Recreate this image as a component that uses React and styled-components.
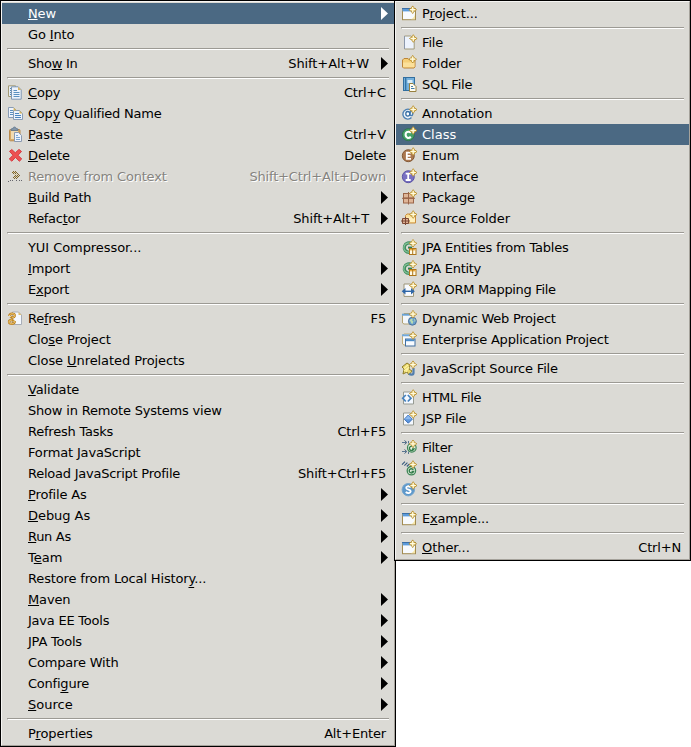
import React from "react";
import styled, { createGlobalStyle, css } from "styled-components";

const GlobalStyle = createGlobalStyle`
  * { box-sizing: border-box; }
  body { margin: 0; background: #fff; overflow: hidden; }
`;

const FACE = "#dbdad5";
const SELECT = "#4b6983";

const Stage = styled.main`
  display: flex;
  align-items: flex-start;
  width: 691px;
  height: 747px;
  background: #fff;
  font: 13px/21px "DejaVu Sans", Verdana, sans-serif;
  color: #000;
  cursor: default;
`;

const MenuPanel = styled.div`
  flex: none;
  width: ${(p) => p.$width}px;
  margin-left: ${(p) => p.$overlap || 0}px;
  border: 1px solid #000;
  background: ${FACE};
`;

const MenuBevel = styled.div`
  display: flex;
  flex-direction: column;
  padding: 1px 0;
  border: 1px solid;
  border-color: #f6f5f3 #a5a29b #a5a29b #f6f5f3;
`;

const Item = styled.div`
  display: flex;
  align-items: center;
  height: 21px;
  padding: 0 6px 0 5px;
  white-space: pre;
  ${(p) => p.$selected && css`
    background: ${SELECT};
    color: #fff;
  `}
  ${(p) => p.$disabled && css`
    color: #86847f;
    text-shadow: 1px 1px 0 #fff;
  `}
`;

const IconSlot = styled.span`
  display: flex;
  flex: none;
  width: 21px;
  height: 17px;
  padding-bottom: 1px;
`;

const Glyph = styled.svg`
  width: 16px;
  height: 16px;
  flex: none;
  overflow: visible;
`;

const Label = styled.span`
  flex: 1;
  letter-spacing: ${(p) => p.$tracking}px;
`;

const Mnemonic = styled.span`
  text-decoration: underline;
  text-decoration-thickness: 1px;
  text-decoration-skip-ink: none;
  text-underline-offset: ${(p) => (p.$low ? 4 : 1)}px;
`;

const Shortcut = styled.span`
  margin-right: ${(p) => (p.$beforeArrow ? 12 : 2)}px;
  letter-spacing: ${(p) => (p.$beforeArrow ? -0.1 : -0.17)}px;
`;

const Arrow = styled.svg`
  width: 7px;
  height: 13px;
  flex: none;
  fill: currentColor;
`;

const Separator = styled.div`
  height: 2px;
  margin: 3px 5px;
  border-top: 1px solid #9c9a94;
  border-bottom: 1px solid #fff;
  border-left: 1px solid #9c9a94;
`;

/* ---------- icon pieces ---------- */

const Star = ({ x = 12.2, y = 4.5 }) => (
  <g transform={`translate(${x} ${y})`}>
    <path d="M0-3.8 1.5-1.5 3.8 0 1.5 1.5 0 3.8-1.5 1.5-3.8 0-1.5-1.5Z" fill="#e3c469" stroke="#b98f2f" strokeWidth=".9" />
    <path d="M0-2.7V2.7M-2.7 0H2.7" stroke="#fffbe0" strokeWidth="1.2" />
  </g>
);

const Sheet = ({ x, y, w, h, stroke = "#93a6bf", fill = "#edf3fc" }) => (
  <path d={`M${x} ${y}h${w - 3}l3 3v${h - 3}h${-w}z`} fill={fill} stroke={stroke} />
);

const TypeBall = ({ color, dark, letter }) => (
  <>
    <circle cx="7.3" cy="8.7" r="6" fill={color} stroke={dark} strokeWidth=".9" />
    {letter}
  </>
);

const Grid = () => (
  <g fill="#dfb698" stroke="#9a6549">
    <rect x="2.5" y="4.5" width="5" height="4.7" />
    <rect x="7.5" y="4.5" width="5" height="4.7" />
    <rect x="2.5" y="9.2" width="5" height="4.8" />
    <rect x="7.5" y="9.2" width="5" height="4.8" />
    <path d="M7.5 3v12.5M1 9.3h13" />
  </g>
);

const JpaClass = () => (
  <>
    <path d="M11 5A4.7 4.7 0 1 0 8.5 13.3" fill="none" stroke="#3f8f60" strokeWidth="3.2" />
    <path d="M10.6 5.2A4.6 4.6 0 1 0 8.2 13.1" fill="none" stroke="#8cc49c" strokeWidth="1.1" />
    <path d="M11 8.6H7" stroke="#2f8052" strokeWidth="2" />
    <rect x="8.5" y="9.5" width="6.5" height="6" fill="#fffbe8" stroke="#ad761c" />
    <path d="M9 10.7h5.6" stroke="#edac3e" strokeWidth="1.4" />
    <path d="M11.7 10v5" stroke="#ad761c" />
    <Star x={12} y={4.3} />
  </>
);

const NewWindow = () => (
  <>
    <rect x="1.5" y="3.5" width="13" height="11.2" fill="#f7fafd" stroke="#a28b50" />
    <path d="M10 14.2c2.5-1 3.8-3 4-6v6z" fill="#f6e6a8" />
    <path d="M1 3.5h12" stroke="#3b6ea5" />
    <path d="M1.5 5.2h12.5" stroke="#5b9bdc" strokeWidth="2.4" />
    <Star x={11.7} y={4.7} />
  </>
);

const icons = {
  copy: (
    <>
      <path d="M1.5 1.8h7v10.7h-7z" fill="#e8eef4" stroke="#a39a74" />
      <path d="M3 4.5h2M3 6.5h2M3 8.5h2M3 10.5h2" stroke="#4f86b5" />
      <Sheet x={4.5} y={2.8} w={9.7} h={12.4} stroke="#7d96b2" />
      <path d="M11 2.8v3.2h3.2z" fill="#d9b565" />
      <path d="M6.5 6.5H10M6.5 8.5h6M6.5 10.5h6M6.5 12.5h6" stroke="#5c91c0" />
    </>
  ),
  copyName: (
    <>
      <Sheet x={1.5} y={2.5} w={8} h={10} stroke="#899cb5" />
      <path d="M3 5.5h3M3 7.5h3M3 9.5h3" stroke="#5c8fbe" />
      <Sheet x={6.5} y={5.5} w={9} h={9} stroke="#899cb5" />
      <path d="M6.6 2.5 9.5 5.5H6.6zM12.5 5.5l3 3h-3z" fill="#dbb657" />
      <path d="M8 8.5h4M8 10.5h6M8 12.5h6" stroke="#4d87bf" />
    </>
  ),
  paste: (
    <>
      <rect x="2.5" y="3.5" width="10.5" height="11.3" rx="1" fill="#d9aa64" stroke="#b98a4c" />
      <rect x="4" y="5" width="7" height="8" fill="#f1dbb2" />
      <path d="M4 4.5V3l2-.5c0-2 3-2 3 0l2 .5v1.5z" fill="#8396a8" stroke="#60758d" strokeWidth=".8" />
      <Sheet x={7.5} y={6.5} w={7} h={9} stroke="#8c9ab0" />
      <path d="M9 9.5h2M9 11.5h4M9 13.5h4" stroke="#7da7d3" />
    </>
  ),
  delete: (
    <path
      d="M2.5 4.3 4.8 2.5 8.3 5.8 12 2.4l2.5 2.1L11 8.2l3.7 3.8-2.3 2.2-4-3.8-3.5 3.8L2.3 12 6 8.2z"
      fill="#ed5151" stroke="#d83b42" strokeLinejoin="round"
    />
  ),
  remove: (
    <>
      <g fill="none" stroke="#7c642c" strokeDasharray="1 1">
        <path d="M6 3.5h3M5 4.5h5M6 5.5h5M7 6.5h5M8 7.5h5M7 8.5h5M6 9.5h5M7 10.5h3" />
      </g>
      <path d="M6 4.5h3M7 6.5h4M8 8.5h3" stroke="#d3c193" strokeDasharray="1 1" />
      <path d="M3 12.5h3M9 12.5h1M12 12.5h4M1 13.5h2" stroke="#65656d" strokeDasharray="1 1" />
    </>
  ),
  refresh: (
    <>
      <Sheet x={5.5} y={2} w={9} h={12.5} stroke="#a8aeb8" fill="#f5f9ff" />
      <path d="M11.5 2v3h3z" fill="#e1bd69" />
      <g fill="none" stroke="#b87d1e" strokeWidth="2.3">
        <path d="M2.3 6C2.5 3.2 7.8 3 7.8 5.4c0 2-2 2-3.5 2.2" />
        <path d="M7.8 11C8 14.4 2 14.6 2 12c0-1.6 1.6-2 3-2" />
      </g>
      <g fill="none" stroke="#f7d27a" strokeWidth="1">
        <path d="M2.3 6C2.5 3.2 7.8 3 7.8 5.4c0 2-2 2-3.5 2.2" />
        <path d="M7.8 11C8 14.4 2 14.6 2 12c0-1.6 1.6-2 3-2" />
      </g>
      <path d="M5 5.8 2.5 7.8l2.7 1.2zM5 8.8l3 1.4-3 1.6z" fill="#c38c22" />
    </>
  ),
  window: <NewWindow />,
  file: (
    <>
      <Sheet x={3.5} y={2} w={9.7} h={13} stroke="#a29b7c" fill="#edf3fd" />
      <path d="M3.5 15V2" stroke="#8b97aa" />
      <Star x={12.3} y={4.5} />
    </>
  ),
  folder: (
    <>
      <path d="M1.5 12V5L3 3.5h4L8.5 5H14v7l-1 1H2.5z" fill="#f5cf78" stroke="#bc8438" />
      <path d="M2 7.5h11.5v4.7H2z" fill="#fbe09a" />
      <Star x={11.7} y={4.2} />
    </>
  ),
  sql: (
    <>
      <rect x="2.5" y="1.5" width="11" height="13" fill="#74b1dd" stroke="#336f9f" />
      <path d="M4.7 2v12.5" stroke="#2d6d9f" strokeWidth="1.2" />
      <path d="M6.5 4h5v3h-5z" fill="#d8ecf7" />
      <Sheet x={8.5} y={7.5} w={6.5} h={8} stroke="#98803f" fill="#fffdf2" />
      <path d="M10 10.5h2M10 12.5h3.5" stroke="#427ca9" />
    </>
  ),
  annotation: (
    <>
      <path d="M10.5 12.6A5 5 0 1 1 11.8 8.2c0 3.3-3 3-2.8.8l.5-3.2" fill="#eef4fa" stroke="#4d80b3" strokeWidth="1.4" />
      <ellipse cx="6.8" cy="8.8" rx="2" ry="2.3" fill="#fff" stroke="#376fa5" strokeWidth="1.3" />
      <Star />
    </>
  ),
  class: (
    <>
      <TypeBall color="#45a067" dark="#2c744a" letter={<path d="M9.9 6.6C6.3 4.3 4.4 7 4.6 8.9c.2 3 2.9 4 5.3 2" fill="none" stroke="#fff" strokeWidth="2.1" />} />
      <Star />
    </>
  ),
  enum: (
    <>
      <TypeBall color="#ab7850" dark="#7d502b" letter={<path d="M10 5.7H5.8v6.2H10M6 8.8h3.5" fill="none" stroke="#fff" strokeWidth="1.8" />} />
      <Star />
    </>
  ),
  interface: (
    <>
      <TypeBall color="#7870c2" dark="#544ca0" letter={<path d="M4.7 5.7h5M7.2 6v6M4.7 12h5" fill="none" stroke="#fff" strokeWidth="1.8" />} />
      <Star />
    </>
  ),
  package: (
    <>
      <Grid />
      <Star />
    </>
  ),
  sourceFolder: (
    <>
      <path d="M4.5 11V5.5L6 4h3l1 1.5h4.5V13h-10z" fill="#f9df99" stroke="#ca8d3d" />
      <path d="M6 7.5h8V12H6z" fill="#fff0bd" />
      <path d="M1.5 8.5h6v5h-6zM4.5 7v8M0 11h9" fill="#dfb193" stroke="#7d4935" />
      <Star />
    </>
  ),
  jpa: <JpaClass />,
  orm: (
    <>
      <Sheet x={3} y={3} w={9.5} h={12.4} stroke="#9c9578" fill="#f9fbff" />
      <path d="M3 10.3h9" stroke="#2f67a8" strokeWidth="1.4" />
      <path d="m.7 10.3 3.8-3.2v6.4zM13.8 10.3 10 7.1v6.4z" fill="#2f67a8" />
      <Star />
    </>
  ),
  webProject: (
    <>
      <path d="M1.5 5.5 3 3.5h8l1 2V14H3l-1.5-1z" fill="#f3f7fb" stroke="#b3a374" />
      <path d="M1 4.7h10" stroke="#69a2d5" strokeWidth="2" />
      <circle cx="11.4" cy="11.2" r="4" fill="#669dcc" stroke="#4b6e96" strokeWidth=".9" />
      <path d="M8.5 10.5c1-2 2.5-2 3.3-1.5l-.6 1.5 1.3 1-1 2.5c-2-.5-1-2-3-3.5zM13 8.3l1.6 1.8-.8 2.3z" fill="#b8dab3" />
      <Star x={12} y={4.2} />
    </>
  ),
  enterprise: (
    <>
      <path d="M1.5 13V4.5L3 3h9.5v6H5v5H3z" fill="#f5f9fc" stroke="#c0ad77" />
      <path d="M1 4.3h11" stroke="#72a9dc" strokeWidth="2" />
      <rect x="4.5" y="8" width="9.5" height="7" fill="#f8fbff" stroke="#426f9f" />
      <path d="M5 9.2h8.5" stroke="#4a8bc8" strokeWidth="2" />
      <Star x={12} y={4.5} />
    </>
  ),
  js: (
    <>
      <path d="m1 7 5-4 3 2-1 4 3 2-3 4-2-3-4 2 1-5z" fill="#e7d66e" stroke="#8e7d2a" />
      <path d="M3 8.5 7 5M5 12l3-5M3 11l4-3" stroke="#fff4a4" strokeWidth="1.2" />
      <path d="M12.5 8v5c0 2-3 2-4.5.7" fill="none" stroke="#527eac" strokeWidth="2.2" />
      <Star x={12} y={4.7} />
    </>
  ),
  html: (
    <>
      <Sheet x={2.5} y={3} w={10} h={12} stroke="#979b93" fill="#f5f9ff" />
      <path d="M4.8 6 1.7 9.2l3.1 3.3M6.8 6 10 9.2l-3.2 3.3" fill="none" stroke="#4682bd" strokeWidth="1.7" />
      <Star />
    </>
  ),
  jsp: (
    <>
      <Sheet x={2.5} y={3} w={10} h={12} stroke="#979b93" fill="#f5f9ff" />
      <path d="m7.3 5 4 4.2-4 4-4-4z" fill="#5c96dd" stroke="#3c6fb6" />
      <path d="m7.3 5.5 3.5 3.7H3.8z" fill="#8dbaf0" />
      <Star />
    </>
  ),
  filter: (
    <>
      <path d="M1 3.5h4M1 12.5h4" stroke="#5c7690" />
      <path d="m3.5 1.5 2.3 2-2.3 2M3.5 10.5l2.3 2-2.3 2" fill="none" stroke="#45627f" />
      <path d="M7.5 2v2.5M7.5 12.5v2.5" stroke="#5c7690" />
      <circle cx="10.8" cy="8.8" r="4.3" fill="#e5efdf" stroke="#3d8555" strokeWidth="1.2" />
      <path d="M13 8c-3-2-5 0-4.5 2 .4 2 3.5 2 4.5 0h-2" fill="none" stroke="#327c4a" strokeWidth="1.4" />
      <Star x={12} y={4.8} />
    </>
  ),
  listener: (
    <>
      <path d="m1 4.7 3-3M3.4 5.7l3-3M5.8 6.5l2.7-2.7" stroke="#34587c" strokeWidth="1.1" />
      <circle cx="10.4" cy="10.7" r="4.2" fill="#e4efdf" stroke="#3d8555" strokeWidth="1.3" />
      <path d="M12.5 9.7c-3-2-4.7 0-4.2 1.7.5 2 3.5 2 4.2 0h-2" fill="none" stroke="#327c4a" strokeWidth="1.5" />
      <Star x={12} y={4.5} />
    </>
  ),
  servlet: (
    <>
      <circle cx="7.3" cy="8.7" r="6.2" fill="#5d98cb" stroke="#75a6cd" />
      <path d="M9.7 6.2C7.5 4.6 5 5.2 5.2 7c.2 2.1 4.5 1.3 4.5 3.3 0 2-3 2.3-5 .7" fill="none" stroke="#fff" strokeWidth="1.8" />
      <Star />
    </>
  ),
};

const SEP = null;

const contextItems = [
  { label: "_New", arrow: true, selected: true },
  { label: "Go _Into" },
  SEP,
  { label: "Sho_w In", keys: "Shift+Alt+W", arrow: true, tracking: -0.25 },
  SEP,
  { label: "_Copy", keys: "Ctrl+C", icon: "copy" },
  { label: "Cop_y Qualified Name", icon: "copyName", tracking: -0.22 },
  { label: "_Paste", keys: "Ctrl+V", icon: "paste", tracking: 0 },
  { label: "_Delete", keys: "Delete", icon: "delete" },
  { label: "Remove from Context", keys: "Shift+Ctrl+Alt+Down", icon: "remove", disabled: true, tracking: -0.19 },
  { label: "_Build Path", arrow: true, tracking: -0.2 },
  { label: "Refac_tor", keys: "Shift+Alt+T", arrow: true, tracking: -0.3 },
  SEP,
  { label: "YUI Compressor...", tracking: -0.07 },
  { label: "_Import", arrow: true },
  { label: "E_xport", arrow: true, tracking: -0.25 },
  SEP,
  { label: "Re_fresh", keys: "F5", icon: "refresh", tracking: -0.25 },
  { label: "Clo_se Project", tracking: -0.1 },
  { label: "Close _Unrelated Projects", tracking: -0.08 },
  SEP,
  { label: "_Validate" },
  { label: "Show in Remote Systems view", tracking: -0.19 },
  { label: "Refresh Tasks", keys: "Ctrl+F5", tracking: -0.23 },
  { label: "Format JavaScript" },
  { label: "Reload JavaScript Profile", keys: "Shift+Ctrl+F5", tracking: -0.24 },
  { label: "_Profile As", arrow: true },
  { label: "_Debug As", arrow: true, tracking: -0.05 },
  { label: "_Run As", arrow: true, tracking: -0.3 },
  { label: "T_eam", arrow: true, tracking: 0 },
  { label: "Restore from Local Histor_y..." },
  { label: "_Maven", arrow: true },
  { label: "Java EE Tools", arrow: true, tracking: -0.23 },
  { label: "JPA Tools", arrow: true, tracking: -0.22 },
  { label: "Compare With", arrow: true, tracking: -0.18 },
  { label: "Confi_gure", arrow: true, tracking: -0.22 },
  { label: "_Source", arrow: true, tracking: 0 },
  SEP,
  { label: "P_roperties", keys: "Alt+Enter", tracking: -0.1 },
];

const newItems = [
  { label: "P_roject...", icon: "window", tracking: -0.1 },
  SEP,
  { label: "File", icon: "file" },
  { label: "Folder", icon: "folder" },
  { label: "SQL File", icon: "sql" },
  SEP,
  { label: "Annotation", icon: "annotation", tracking: -0.1 },
  { label: "Class", icon: "class", selected: true, tracking: 0 },
  { label: "Enum", icon: "enum", tracking: 0 },
  { label: "Interface", icon: "interface", tracking: -0.22 },
  { label: "Package", icon: "package" },
  { label: "Source Folder", icon: "sourceFolder", tracking: -0.08 },
  SEP,
  { label: "JPA Entities from Tables", icon: "jpa", tracking: -0.2 },
  { label: "JPA Entity", icon: "jpa", tracking: -0.28 },
  { label: "JPA ORM Mapping File", icon: "orm", tracking: -0.32 },
  SEP,
  { label: "Dynamic Web Project", icon: "webProject", tracking: -0.25 },
  { label: "Enterprise Application Project", icon: "enterprise", tracking: -0.19 },
  SEP,
  { label: "JavaScript Source File", icon: "js", tracking: -0.18 },
  SEP,
  { label: "HTML File", icon: "html", tracking: -0.32 },
  { label: "JSP File", icon: "jsp", tracking: -0.2 },
  SEP,
  { label: "Filter", icon: "filter", tracking: -0.3 },
  { label: "Listener", icon: "listener" },
  { label: "Servlet", icon: "servlet" },
  SEP,
  { label: "E_xample...", icon: "window", tracking: -0.18 },
  SEP,
  { label: "_Other...", keys: "Ctrl+N", icon: "window", tracking: -0.05 },
];

function MenuLabel({ text, tracking = -0.15 }) {
  const at = text.indexOf("_");
  if (at < 0) return <Label $tracking={tracking}>{text}</Label>;
  const key = text[at + 1];
  return (
    <Label $tracking={tracking}>
      {text.slice(0, at)}
      <Mnemonic $low={key === "y" || key === "g"}>{key}</Mnemonic>
      {text.slice(at + 2)}
    </Label>
  );
}

function Menu({ items, width, overlap }) {
  return (
    <MenuPanel $width={width} $overlap={overlap} role="menu">
      <MenuBevel>
        {items.map((item, i) =>
          item === SEP ? (
            <Separator key={i} role="separator" />
          ) : (
            <Item key={i} role="menuitem" $selected={item.selected} $disabled={item.disabled}>
              <IconSlot>
                {item.icon && <Glyph viewBox="0 0 16 16">{icons[item.icon]}</Glyph>}
              </IconSlot>
              <MenuLabel text={item.label} tracking={item.tracking} />
              {item.keys && <Shortcut $beforeArrow={item.arrow}>{item.keys}</Shortcut>}
              {item.arrow && (
                <Arrow viewBox="0 0 7 13">
                  <path d="M0 0 7 6.5 0 13Z" />
                </Arrow>
              )}
            </Item>
          )
        )}
      </MenuBevel>
    </MenuPanel>
  );
}

export default function App() {
  return (
    <>
      <GlobalStyle />
      <Stage>
        <Menu items={contextItems} width={396} />
        <Menu items={newItems} width={297} overlap={-2} />
      </Stage>
    </>
  );
}
